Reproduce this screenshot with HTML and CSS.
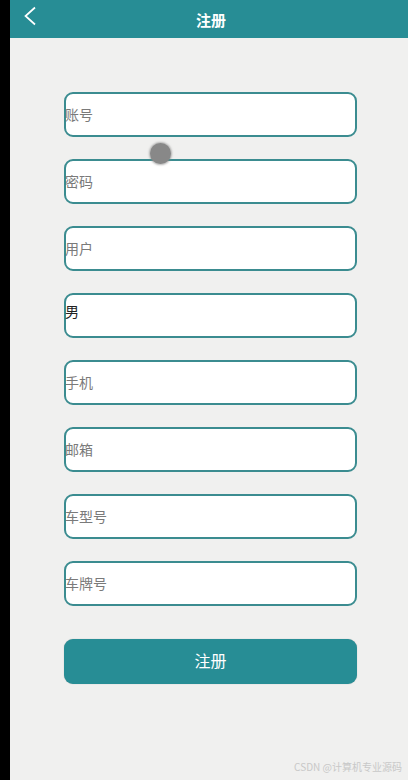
FILE: index.html
```html
<!DOCTYPE html>
<html lang="zh">
<head>
<meta charset="utf-8">
<link rel="stylesheet" href="styles.css">
</head>
<body>
<div class="app">
  <div class="strip"></div>
  <div class="screen">
    <header class="bar">
      <svg class="back" width="14" height="20" viewBox="0 0 14 20"><path d="M12 1.5 L2.5 10 L12 18.5" fill="none" stroke="#fff" stroke-width="1.7"/></svg>
      <h1 class="title">注册</h1>
    </header>
    <main class="form">
      <div class="field"><span class="ph">账号</span></div>
      <div class="field"><span class="ph">密码</span></div>
      <div class="field"><span class="ph">用户</span></div>
      <div class="field"><span class="val">男</span></div>
      <div class="field"><span class="ph">手机</span></div>
      <div class="field"><span class="ph">邮箱</span></div>
      <div class="field"><span class="ph">车型号</span></div>
      <div class="field"><span class="ph">车牌号</span></div>
      <button class="submit">注册</button>
    </main>
    <div class="touch"></div>
    <div class="mark">CSDN @计算机专业源码</div>
  </div>
</div>
</body>
</html>
```
FILE: styles.css
```css
html, body { margin: 0; padding: 0; }
body { width: 408px; height: 780px; overflow: hidden; font-family: "Microsoft YaHei", "Noto Sans CJK SC", sans-serif; }
.app { display: flex; height: 780px; }
.strip { width: 10px; background: #000; flex: none; }
.screen { flex: 1; background: #f0f0ef; position: relative; display: flex; flex-direction: column; }
.bar { height: 38px; background: #278d95; display: flex; align-items: center; justify-content: center; position: relative; }
.back { position: absolute; left: 13px; top: 6px; }
.title { margin: 0; color: #fff; font-size: 15px; font-weight: bold; margin-left: 4px; }
.form { display: flex; flex-direction: column; gap: 22px; padding: 54px 51px 0 54px; }
.field { height: 41px; border: 2px solid #3b8c90; border-radius: 9px; background: #fff; display: flex; align-items: center; padding-bottom: 2px; box-sizing: content-box; height: 39px; }
.ph { color: #7a7a7a; font-size: 14px; margin-left: -1px; }
.val { color: #222; font-size: 14px; margin-left: -1px; margin-top: -8px; }
.submit { margin-top: 11px; height: 45px; padding: 0 0 4px; border: none; border-radius: 9px; background: #278d95; color: #fff; font-size: 16px; font-family: inherit; box-shadow: 0 0 1px rgba(0,0,0,0.3); }
.touch { position: absolute; left: 140px; top: 143px; width: 21px; height: 21px; border-radius: 50%; background: #888; box-shadow: 0 0 2px 1px rgba(136,136,136,0.6); }
.mark { position: absolute; right: 6px; bottom: 6px; font-size: 10px; color: #c8c8c8; }
```
